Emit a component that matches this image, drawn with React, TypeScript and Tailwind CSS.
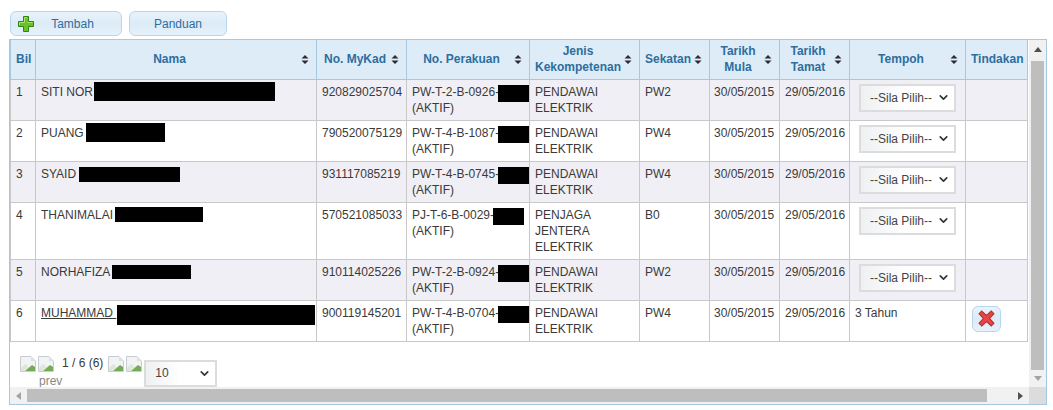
import React from 'react';
import { ChevronDown } from 'lucide-react';

const font = 'font-["Liberation_Sans",Arial,sans-serif]';

const cols = [
  { label: ['Bil'], w: 'w-[25px]', sort: false },
  { label: ['Nama'], w: 'w-[281px]', sort: true },
  { label: ['No. MyKad'], w: 'w-[90px]', sort: true },
  { label: ['No. Perakuan'], w: 'w-[123px]', sort: true },
  { label: ['Jenis', 'Kekompetenan'], w: 'w-[110px]', sort: true },
  { label: ['Sekatan'], w: 'w-[70px]', sort: true },
  { label: ['Tarikh', 'Mula'], w: 'w-[70px]', sort: true },
  { label: ['Tarikh', 'Tamat'], w: 'w-[70px]', sort: true },
  { label: ['Tempoh'], w: 'w-[116px]', sort: true },
  { label: ['Tindakan'], w: 'w-[62px]', sort: false },
];

const rows = [
  { no: 1, name: 'SITI NOR', black: 'ml-[1px] -mt-[2px] w-[181px] h-[19px]', ic: '920829025704', cert: 'PW-T-2-B-0926-', jenis: ['PENDAWAI', 'ELEKTRIK'], sek: 'PW2' },
  { no: 2, name: 'PUANG', black: 'ml-[2px] -mt-[2px] w-[79px] h-[19px]', ic: '790520075129', cert: 'PW-T-4-B-1087-', jenis: ['PENDAWAI', 'ELEKTRIK'], sek: 'PW4' },
  { no: 3, name: 'SYAID', black: 'ml-[3px] mt-[1px] w-[101px] h-[15px]', ic: '931117085219', cert: 'PW-T-4-B-0745-', jenis: ['PENDAWAI', 'ELEKTRIK'], sek: 'PW4' },
  { no: 4, name: 'THANIMALAI', black: 'ml-[2px] w-[88px] h-[15px]', ic: '570521085033', cert: 'PJ-T-6-B-0029-', jenis: ['PENJAGA', 'JENTERA', 'ELEKTRIK'], sek: 'B0' },
  { no: 5, name: 'NORHAFIZA', black: 'ml-[2px] mt-[1px] w-[79px] h-[14px]', ic: '910114025226', cert: 'PW-T-2-B-0924-', jenis: ['PENDAWAI', 'ELEKTRIK'], sek: 'PW2' },
  { no: 6, name: 'MUHAMMAD\u00a0', black: 'ml-px w-[198px] h-[20px]', ic: '900119145201', cert: 'PW-T-4-B-0704-', jenis: ['PENDAWAI', 'ELEKTRIK'], sek: 'PW4', done: true },
];

function SortIcon() {
  return (
    <svg width="8" height="9" viewBox="0 0 8 9" className="shrink-0">
      <path d="M4 0 L7.5 3.6 H0.5 Z M4 9 L0.5 5.4 H7.5 Z" fill="#2b2b33" />
    </svg>
  );
}

function BrokenImg() {
  return (
    <svg width="16" height="16" viewBox="0 0 16 16" className="shrink-0">
      <path d="M0.5 0.5 H11 L15.5 5 V15.5 H0.5 Z" fill="#f1f3f5" stroke="#c9cdd1" />
      <path d="M1 12 L5 8 L9 11 L4 15 H1 Z" fill="#dfe6dc" />
      <path d="M5 15 L12 9 L15 11 V15 Z" fill="#74ab57" />
      <path d="M11 1 V5 H15 Z" fill="#dde1e5" />
    </svg>
  );
}

function Arrow({ d, w, h, color }: { d: string; w: number; h: number; color: string }) {
  return (
    <svg width={w} height={h} viewBox={`0 0 ${w} ${h}`} className="shrink-0">
      <path d={d} fill={color} />
    </svg>
  );
}

function Select({ label, cls }: { label: string; cls: string }) {
  return (
    <div className={`flex items-center justify-between border-2 border-[#dcdcdc] bg-gradient-to-r from-[#eef0f2] via-white to-white text-[#444] ${cls}`}>
      <span>{label}</span>
      <ChevronDown size={13} strokeWidth={3} className="text-[#333]" />
    </div>
  );
}

const btn = 'rounded-[6px] border border-[#b9d6ec] bg-gradient-to-b from-[#e8f3fb] via-[#dcebf7] to-[#e6f2fb]';
const td = 'border border-[#c8c8c8] px-[5px] pt-[4px] align-top';

export default function App() {
  return (
    <div className={`h-[410px] w-[1053px] overflow-hidden bg-white pl-[9px] pt-[11px] text-[12px] leading-[16px] text-[#3a3a3a] ${font}`}>
      <div className="mb-[3px] ml-px flex h-[25px] gap-[7px]">
        <button className={`relative h-[25px] w-[112px] pl-[13px] text-[#2e6e9e] ${btn}`}>
          <svg width="16" height="16" viewBox="0 0 16 16" className="absolute left-[7px] top-[4px]">
            <path d="M5.5 0.5 H10.5 V5.5 H15.5 V10.5 H10.5 V15.5 H5.5 V10.5 H0.5 V5.5 H5.5 Z" fill="#6cc02c" stroke="#2f8412" />
            <path d="M6.5 6.5 V1.5 H9 M1.5 9 V6.5 H6.5 M9.5 6.5 H14.5" fill="none" stroke="#a5e56c" />
          </svg>
          Tambah
        </button>
        <button className={`h-[25px] w-[98px] text-[#2e6e9e] ${btn}`}>Panduan</button>
      </div>
      <div className="relative h-[366px] w-[1038px] overflow-hidden border border-[#a6c9e2]">
        <table className="w-[1017px] table-fixed border-collapse">
          <thead>
            <tr className="h-[39px] bg-[#deecf8]">
              {cols.map(c => (
                <th key={c.label.join()} className={`${c.w} border border-t-0 border-[#a6c9e2] p-0 text-[12px] font-bold leading-[16px] text-[#2e6e9e]`}>
                  <div className={`flex items-center justify-between ${c.sort ? 'pl-[2px] pr-[7px]' : 'px-[5px]'}`}>
                    <span className="flex-1 text-center">{c.label.map(l => <div key={l}>{l}</div>)}</span>
                    {c.sort && <SortIcon />}
                  </div>
                </th>
              ))}
            </tr>
          </thead>
          <tbody>
            {rows.map(r => (
              <tr key={r.no} className={`${r.no === 4 ? 'h-[57px]' : 'h-[41px]'} ${r.no % 2 ? 'bg-[#f0eff5]' : 'bg-white'}`}>
                <td className={td}>{r.no}</td>
                <td className={td}>
                  <div className="flex items-start">
                    <span className={r.done ? 'underline' : ''}>{r.name}</span>
                    <span className={`shrink-0 bg-black ${r.black}`} />
                  </div>
                </td>
                <td className={td}>{r.ic}</td>
                <td className={`${td} pr-0`}>
                  <div className="flex h-[16px] items-start whitespace-nowrap">
                    {r.cert}
                    <span className="-ml-px mt-px h-[17px] w-[31px] bg-black" />
                  </div>
                  <div>(AKTIF)</div>
                </td>
                <td className={td}>{r.jenis.map(j => <div key={j}>{j}</div>)}</td>
                <td className={td}>{r.sek}</td>
                <td className={`${td} pl-[4px] pr-0`}>30/05/2015</td>
                <td className={`${td} px-[4px]`}>29/05/2016</td>
                <td className={`${td} px-[4px]`}>
                  {r.done ? '3 Tahun' : <Select label="--Sila Pilih--" cls="ml-[4px] h-[28px] w-[97px] pl-[9px] pr-[4px]" />}
                </td>
                <td className="border border-[#c8c8c8] px-[5px] align-top">
                  {r.done && (
                    <div className={`ml-px mt-[5px] flex h-[26px] w-[29px] items-center justify-center ${btn}`}>
                      <svg width="17" height="17" viewBox="0 0 16 16">
                        <path d="M3.5 1 L8 5 L12.5 1 L15 3.5 L11 8 L15 12.5 L12.5 15 L8 11 L3.5 15 L1 12.5 L5 8 L1 3.5 Z" fill="#e44545" stroke="#c22a2a" />
                      </svg>
                    </div>
                  )}
                </td>
              </tr>
            ))}
          </tbody>
        </table>
        <div className="ml-[10px] mt-[14px] flex items-start">
          <div className="relative mr-[2px]">
            <div className="flex gap-[2px]"><BrokenImg /><BrokenImg /></div>
            <span className="absolute left-[19px] top-[17px] text-[#888]">prev</span>
          </div>
          <span className="-mt-px ml-[6px] mr-[5px]">1 / 6 (6)</span>
          <div className="flex gap-[2px]"><BrokenImg /><BrokenImg /></div>
          <Select label="10" cls="mt-[4px] ml-[2px] h-[27px] w-[73px] pl-[9px] pr-[4px]" />
        </div>
        <div className="absolute bottom-0 left-0 flex h-[17px] w-[1019px] items-center bg-[#f1f1f1]">
          <span className="flex w-[17px] justify-center"><Arrow d="M5 0 V8 L0 4 Z" w={5} h={8} color="#a3a3a3" /></span>
          <div className="h-[13px] w-[960px] bg-[#bebebe]" />
          <span className="ml-auto flex w-[17px] justify-center"><Arrow d="M0 0 V8 L5 4 Z" w={5} h={8} color="#505050" /></span>
        </div>
        <div className="absolute right-0 top-0 flex h-[348px] w-[17px] flex-col items-center bg-[#f1f1f1]">
          <span className="flex h-[21px] items-start pt-[7px]"><Arrow d="M0 5 H8 L4 0 Z" w={8} h={5} color="#505050" /></span>
          <div className="h-[309px] w-[13px] bg-[#bebebe]" />
          <span className="mt-auto flex pb-[7px]"><Arrow d="M0 0 H8 L4 5 Z" w={8} h={5} color="#a3a3a3" /></span>
        </div>
        <div className="absolute bottom-0 right-0 h-[17px] w-[17px] bg-[#dcdcdc]" />
      </div>
    </div>
  );
}
